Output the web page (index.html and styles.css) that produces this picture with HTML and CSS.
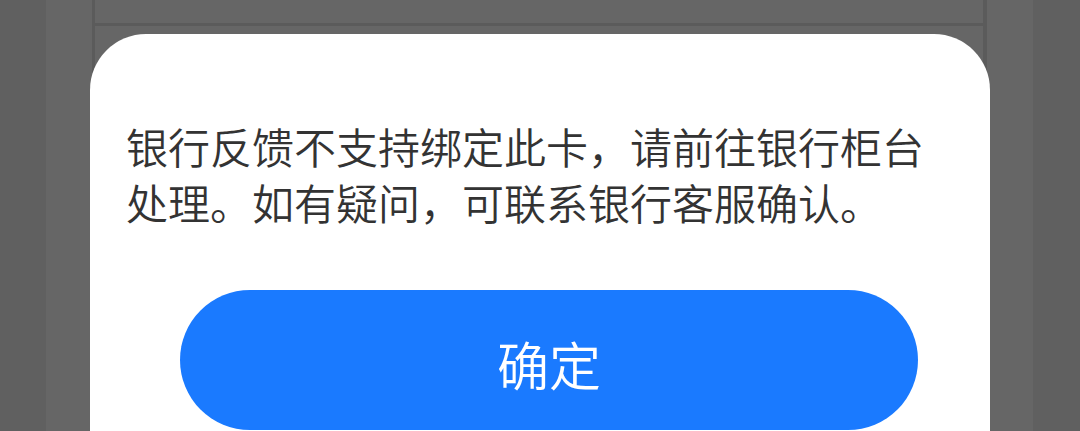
FILE: index.html
```html
<!DOCTYPE html>
<html lang="zh-CN">
<head>
<meta charset="utf-8">
<title>提示</title>
<link rel="stylesheet" href="styles.css">
</head>
<body>
<div class="screen">
  <div class="page">
    <div class="panel">
      <div class="panel-top"></div>
    </div>
  </div>
  <div class="dialog">
    <p class="message">银行反馈不支持绑定此卡，请前往银行柜台处理。如有疑问，可联系银行客服确认。</p>
    <button class="confirm" type="button">确定</button>
  </div>
</div>
</body>
</html>
```

FILE: styles.css
```css
html, body {
  margin: 0;
  padding: 0;
}
body {
  width: 1080px;
  height: 431px;
  overflow: hidden;
  font-family: "Noto Sans CJK SC", "Noto Sans", sans-serif;
}
.screen {
  position: relative;
  height: 431px;
  overflow: hidden;
  background: #606060;
  display: flex;
  padding: 0 47px 0 46px;
  box-sizing: border-box;
}
.page {
  flex: 1;
  background: #666666;
  display: flex;
  padding: 0 46px 0 46px;
}
.panel {
  flex: 1;
  border-left: 3px solid #5b5b5b;
  border-right: 4px solid #5b5b5b;
}
.panel-top {
  height: 23px;
  border-bottom: 3px solid #5b5b5b;
}
.dialog {
  position: absolute;
  left: 90px;
  top: 34px;
  bottom: 0;
  width: 900px;
  box-sizing: border-box;
  background: #ffffff;
  border-radius: 56px 56px 0 0;
  padding: 84px 36px 0 36px;
}
.message {
  margin: 0;
  font-size: 42px;
  font-weight: 350;
  line-height: 56px;
  color: #333333;
  letter-spacing: 0;
}
.confirm {
  display: flex;
  align-items: center;
  justify-content: center;
  box-sizing: border-box;
  margin: 60px 0 0 54px;
  width: 738px;
  height: 140px;
  padding: 8px 0 0 0;
  border: none;
  border-radius: 70px;
  background: #1a7aff;
  color: #ffffff;
  font-family: "Noto Sans CJK SC", "Noto Sans", sans-serif;
  font-size: 52px;
  font-weight: 350;
  line-height: 60px;
}
```
